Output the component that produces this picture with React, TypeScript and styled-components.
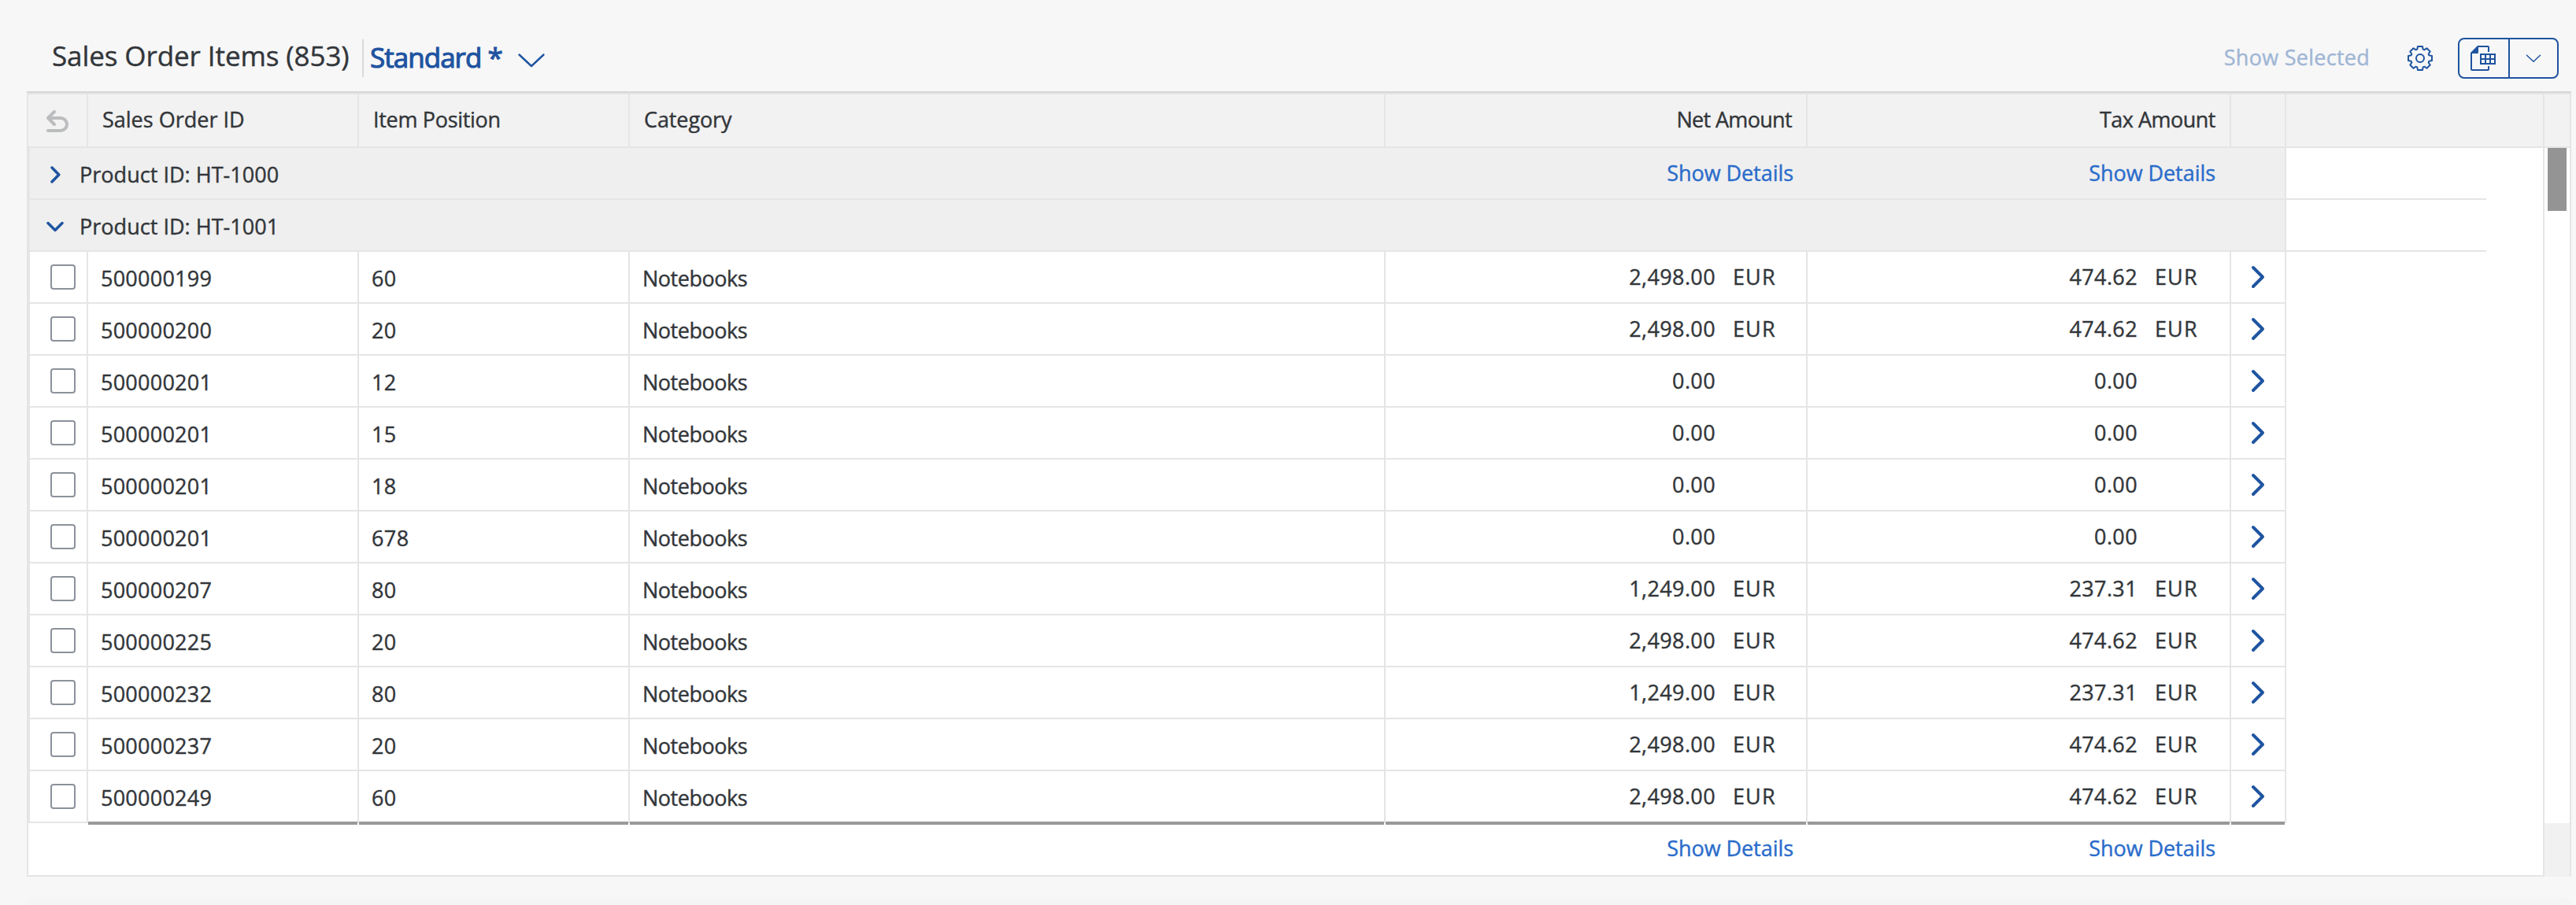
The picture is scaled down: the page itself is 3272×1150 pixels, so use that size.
import React from 'react';
import styled, { createGlobalStyle, css } from 'styled-components';

const line = '#e5e5e5';
const blue = '#1f54a0';
const family = '"Open Sans","Liberation Sans",sans-serif';

const Global = createGlobalStyle`
  * { box-sizing: border-box; }
  body {
    margin: 0;
    background: #f7f7f7;
    color: #32363a;
    font: 400 27px ${family};
    -webkit-text-stroke: 0.4px;
  }
  svg { flex: none; display: block; -webkit-text-stroke: 0; }
`;

const Page = styled.div`
  width: 3272px;
  height: 1150px;
  display: flex;
  flex-direction: column;
  padding-left: 34px;
  overflow: hidden;
`;

const Text = styled.span<{ $ls?: number }>`
  white-space: nowrap;
  letter-spacing: ${p => p.$ls ?? 0}px;
`;

/* Toolbar */
const Toolbar = styled.header`
  height: 116px;
  display: flex;
  align-items: center;
  padding: 32px 22px 0 32px;
`;
const Title = styled.h2`
  margin: 0;
  width: 394px;
  padding-bottom: 7px;
  font-size: 35px;
  font-weight: 400;
  letter-spacing: -0.09px;
  white-space: nowrap;
`;
const plainButton = css`
  border: 0;
  background: none;
  padding: 0;
  font: 400 27px ${family};
`;
const Variant = styled.button`
  ${plainButton}
  height: 48px;
  border-left: 2px solid #d9d9d9;
  padding: 0 0 3px 8px;
  display: flex;
  align-items: center;
  gap: 20px;
  color: ${blue};
  font-size: 35px;
  -webkit-text-stroke: 1.1px;
  svg { margin-top: 9px; }
`;
const Spacer = styled.div`
  flex: 1;
`;
const Ghost = styled.button`
  ${plainButton}
  padding-bottom: 3px;
  color: #a0b6d5;
`;
const IconButton = styled.button`
  ${plainButton}
  margin: 0 32px 0 48px;
`;
const Split = styled.div`
  display: flex;
  width: 128px;
  height: 52px;
  border: 2px solid ${blue};
  border-radius: 8px;
`;
const SplitPart = styled.button`
  ${plainButton}
  width: 62px;
  display: flex;
  align-items: center;
  justify-content: center;
  padding-right: 2px;
  & + & {
    padding-right: 0;
    border-left: 2px solid ${blue};
  }
`;

/* Table */
const Table = styled.section`
  width: 3232px;
  height: 998px;
  flex: none;
  display: flex;
  border-top: 2px solid #d7d7d7;
`;
const Main = styled.div`
  width: 3198px;
  border: 2px solid ${line};
  display: flex;
  flex-direction: column;
  background: #fff;
`;
const Head = styled.div`
  height: 68px;
  display: grid;
  grid-template-columns: 76px 344px 344px 960px 536px 538px 70px 1fr;
  background: #f2f2f2;
  border-bottom: 2px solid ${line};
`;
const Cell = styled.div<{ $right?: boolean }>`
  border-right: 2px solid ${line};
  display: flex;
  align-items: center;
  justify-content: ${p => (p.$right ? 'flex-end' : 'flex-start')};
  padding: 0 18px 3px;
  &:last-child { border-right: 0; }
`;
const UndoIcon = styled.svg`
  margin: 6px 0 0 4px;
`;

const Group = styled.div`
  height: 66px;
  width: 3122px;
  display: flex;
  border-left: 2px solid ${line};
  border-bottom: 2px solid ${line};
`;
const GroupFill = styled.div`
  width: 2866px;
  border-right: 2px solid ${line};
  background: #efefef;
  display: grid;
  grid-template-columns: 1718px 540px 538px 1fr;
`;
const GroupName = styled.div`
  display: flex;
  align-items: center;
  padding: 3px 0 0 20px;
`;
const Toggle = styled.span<{ $open: boolean }>`
  width: ${p => (p.$open ? 25 : 20)}px;
  margin-left: ${p => (p.$open ? 1 : 6)}px;
  margin-right: 17px;
`;
const LinkCell = styled.div<{ $pad: number }>`
  display: flex;
  align-items: center;
  justify-content: flex-end;
  padding: 0 ${p => p.$pad}px 1px 0;
`;
const Link = styled.a`
  color: #2a6ccb;
  letter-spacing: -0.05px;
  white-space: nowrap;
`;

const Item = styled.div`
  height: 66px;
  width: 2868px;
  display: grid;
  grid-template-columns: 74px 344px 344px 960px 536px 538px 70px;
  border-left: 2px solid ${line};
`;
const Data = styled.div<{ $last?: boolean }>`
  position: relative;
  display: flex;
  align-items: center;
  padding: 0 16px;
  border-right: 2px solid ${line};
  border-bottom: 2px solid ${line};
  ${p => p.$last && css`
    &::after {
      content: '';
      position: absolute;
      left: 0;
      right: 0;
      bottom: -4px;
      height: 4px;
      background: #999;
    }
  `}
`;
const TextData = styled(Data)`
  padding-top: 3px;
`;
const AmountData = styled(Data)<{ $pad: number }>`
  justify-content: flex-end;
  padding: 0 ${p => p.$pad}px 1px 0;
`;
const Currency = styled.span`
  width: 99px;
  padding-left: 22px;
  letter-spacing: 1.1px;
  white-space: nowrap;
`;
const Check = styled.span`
  flex: none;
  width: 32px;
  height: 32px;
  border: 2px solid #8c929b;
  border-radius: 4px;
  background: #fff;
  margin-left: 10px;
`;
const NavIcon = styled.svg`
  margin-left: 9px;
`;

const Totals = styled.div`
  height: 66px;
  display: grid;
  grid-template-columns: 1720px 540px 538px 1fr;
  padding-bottom: 3px;
`;

const Rail = styled.div`
  width: 34px;
  border-right: 2px solid ${line};
  border-top: 2px solid ${line};
  display: flex;
  flex-direction: column;
  background: #fff;
`;
const RailHead = styled.div`
  height: 68px;
  background: #f2f2f2;
  border-bottom: 2px solid ${line};
`;
const RailTrack = styled.div`
  flex: 1;
  padding-left: 4px;
`;
const Thumb = styled.div`
  width: 24px;
  height: 80px;
  background: #949494;
`;
const RailFoot = styled.div`
  height: 68px;
  background: #f1f1f1;
`;
const NextPanel = styled.div`
  width: 3232px;
  flex: 1;
  margin-top: 26px;
  border-radius: 24px 24px 0 0;
  background: #f5f5f5;
`;

const stroke = { fill: 'none', stroke: blue, strokeLinecap: 'round', strokeLinejoin: 'round' } as const;

const gearPath = (() => {
  const pts: string[] = [];
  for (let k = 0; k < 8; k++) {
    const a = (k * Math.PI) / 4;
    for (const [x, y] of [[-3.7, -11.4], [-3, -15], [3, -15], [3.7, -11.4]]) {
      pts.push(`${(16 + x * Math.cos(a) - y * Math.sin(a)).toFixed(2)} ${(16 + x * Math.sin(a) + y * Math.cos(a)).toFixed(2)}`);
    }
  }
  return `M${pts.join('L')}Z`;
})();

const Gear = () => (
  <svg width="32" height="32" viewBox="0 0 32 32" {...stroke} strokeWidth="2">
    <path d={gearPath} />
    <circle cx="16" cy="16" r="5" />
  </svg>
);

const ExportIcon = () => (
  <svg width="32" height="32" viewBox="0 0 32 32" fill="none" stroke={blue} strokeWidth="2">
    <path d="M9 1H22Q23 1 23 2V8M1 9V30Q1 31 2 31H22Q23 31 23 30V26" />
    <path d="M0 9L9 0H10V8.500Q10 10 8.500 10H0Z" fill={blue} stroke="none" />
    <path d="M13 11H31V23H13ZM13 17H31M19 11V23M25 11V23" />
  </svg>
);

const rows: [string, string, string, string][] = [
  ['500000199', '60', '2,498.00', '474.62'],
  ['500000200', '20', '2,498.00', '474.62'],
  ['500000201', '12', '0.00', '0.00'],
  ['500000201', '15', '0.00', '0.00'],
  ['500000201', '18', '0.00', '0.00'],
  ['500000201', '678', '0.00', '0.00'],
  ['500000207', '80', '1,249.00', '237.31'],
  ['500000225', '20', '2,498.00', '474.62'],
  ['500000232', '80', '1,249.00', '237.31'],
  ['500000237', '20', '2,498.00', '474.62'],
  ['500000249', '60', '2,498.00', '474.62'],
];

export default function App() {
  return (
    <Page>
      <Global />
      <Toolbar>
        <Title>Sales Order Items (853)</Title>
        <Variant>
          <Text $ls={-0.97}>Standard *</Text>
          <svg width="34" height="18" viewBox="0 0 34 18" {...stroke} strokeWidth="2.4"><path d="M1.500 1.500L17 16L32.500 1.500" /></svg>
        </Variant>
        <Spacer />
        <Ghost><Text $ls={0.27}>Show Selected</Text></Ghost>
        <IconButton><Gear /></IconButton>
        <Split>
          <SplitPart><ExportIcon /></SplitPart>
          <SplitPart>
            <svg width="20" height="12" viewBox="0 0 20 12" {...stroke} strokeWidth="1.5"><path d="M1.500 2.200L10 10.200L18.500 2.200" /></svg>
          </SplitPart>
        </Split>
      </Toolbar>
      <Table>
        <Main>
          <Head>
            <Cell>
              <UndoIcon width="30" height="32" viewBox="0 0 30 32" {...stroke} stroke="#bbbcbe" strokeWidth="4">
                <path d="M11 3L3 11L11 19M3 11H19A8 8 0 0 1 19 27H3" />
              </UndoIcon>
            </Cell>
            <Cell><Text>Sales Order ID</Text></Cell>
            <Cell><Text $ls={-0.31}>Item Position</Text></Cell>
            <Cell><Text $ls={-0.1}>Category</Text></Cell>
            <Cell $right><Text $ls={-0.66}>Net Amount</Text></Cell>
            <Cell $right><Text $ls={-0.5}>Tax Amount</Text></Cell>
            <Cell />
            <Cell />
          </Head>
          {['HT-1000', 'HT-1001'].map((id, i) => (
            <Group key={id}>
              <GroupFill>
                <GroupName>
                  <Toggle $open={i === 1}>
                    {i === 1
                      ? <svg width="24" height="14" viewBox="0 0 24 14" {...stroke} strokeWidth="3.5"><path d="M2 2.500L11 11.500L20 2.500" /></svg>
                      : <svg width="14" height="22" viewBox="0 0 14 22" {...stroke} strokeWidth="3.5"><path d="M2 2L10.800 11L2 20" /></svg>}
                  </Toggle>
                  <Text $ls={0.03}>Product ID: {id}</Text>
                </GroupName>
                <LinkCell $pad={18}>{i === 0 && <Link>Show Details</Link>}</LinkCell>
                <LinkCell $pad={20}>{i === 0 && <Link>Show Details</Link>}</LinkCell>
              </GroupFill>
            </Group>
          ))}
          {rows.map((r, i) => {
            const last = i === rows.length - 1;
            return (
              <Item key={i}>
                <Data><Check /></Data>
                <TextData $last={last}><Text $ls={0.24}>{r[0]}</Text></TextData>
                <TextData $last={last}><Text $ls={0.4}>{r[1]}</Text></TextData>
                <TextData $last={last}><Text $ls={-0.49}>Notebooks</Text></TextData>
                {[r[2], r[3]].map((amount, j) => (
                  <AmountData key={j} $last={last} $pad={j ? 18 : 16}>
                    <Text $ls={0.38}>{amount}</Text>
                    <Currency>{amount === '0.00' ? '' : 'EUR'}</Currency>
                  </AmountData>
                ))}
                <Data $last={last}>
                  <NavIcon width="20" height="32" viewBox="0 0 20 32" {...stroke} strokeWidth="4"><path d="M3 4L15 16L3 28" /></NavIcon>
                </Data>
              </Item>
            );
          })}
          <Totals>
            <span />
            <LinkCell $pad={18}><Link>Show Details</Link></LinkCell>
            <LinkCell $pad={20}><Link>Show Details</Link></LinkCell>
          </Totals>
        </Main>
        <Rail><RailHead /><RailTrack><Thumb /></RailTrack><RailFoot /></Rail>
      </Table>
      <NextPanel />
    </Page>
  );
}
